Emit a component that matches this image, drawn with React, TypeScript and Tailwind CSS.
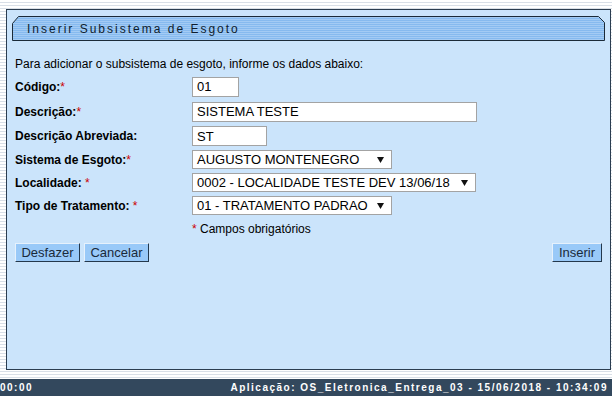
import React from "react";

const Req = ({ space = false }: { space?: boolean }) => (
  <span className="text-[#cc0000] font-normal">{space ? " *" : "*"}</span>
);

function Label({ children }: { children: React.ReactNode }) {
  return <div className="w-[177px] shrink-0 font-bold text-[12px] text-black">{children}</div>;
}

function TextInput({ value, w }: { value: string; w: string }) {
  return (
    <div className={`${w} h-[20px] bg-white border border-[#a3a3a3] pl-[4px] flex items-center text-[13px] text-black leading-none`}>
      {value}
    </div>
  );
}

function Select({ value, w }: { value: string; w: string }) {
  return (
    <div className={`${w} h-[19px] bg-white border border-[#a3a3a3] pl-[4px] pr-[7px] flex items-center justify-between text-[13px] text-black leading-none`}>
      <span>{value}</span>
      <svg width="7" height="6" viewBox="0 0 7 6">
        <polygon points="0,0 7,0 3.5,6" fill="#111" />
      </svg>
    </div>
  );
}

function Btn({ children, w }: { children: React.ReactNode; w: string }) {
  return (
    <div className={`${w} h-[19px] bg-[#99c9f8] border border-t-[#e6f1fc] border-l-[#e6f1fc] border-r-[#24384c] border-b-[#24384c] flex items-center justify-center text-[13px] text-[#1a2a3a] leading-none`}>
      {children}
    </div>
  );
}

export default function App() {
  return (
    <div
      className="w-[612px] h-[396px] overflow-hidden flex flex-col bg-[repeating-linear-gradient(to_bottom,#ffffff_0px,#ffffff_2px,#d9dfe7_2px,#d9dfe7_3px)]"
      style={{ fontFamily: '"Liberation Sans", Arial, sans-serif' }}
    >
      <div className="mt-[9px] ml-[6px] w-[605px] h-[361px] shrink-0 bg-[#cbe4fb] border border-[#2b3d50] pt-[6px] pl-[5px] flex flex-col">
        <div className="relative w-[593px] h-[25px] shrink-0 flex items-center pl-[15px]">
          <svg className="absolute inset-0" width="593" height="25" viewBox="0 0 593 25">
            <defs>
              <pattern id="stripes" width="4" height="2" patternUnits="userSpaceOnUse">
                <rect width="4" height="1" fill="#86baef" />
                <rect y="1" width="4" height="1" fill="#a3cbf4" />
              </pattern>
            </defs>
            <polygon
              points="0.5,7.5 6.5,0.5 586.5,0.5 592.5,6.5 592.5,24.5 0.5,24.5"
              fill="url(#stripes)"
              stroke="#1b2a38"
              strokeWidth="1"
            />
          </svg>
          <span className="relative text-[12px] tracking-[2px] text-[#0e1d2e] leading-none">
            Inserir Subsistema de Esgoto
          </span>
        </div>

        <div className="pl-[3px] flex flex-col">
          <div className="mt-[15px] h-[16px] flex items-center text-[12px] text-black">
            Para adicionar o subsistema de esgoto, informe os dados abaixo:
          </div>
          <div className="mt-[2px] flex flex-col">
            <div className="h-[25px] flex items-center">
              <Label>
                Código:<Req />
              </Label>
              <TextInput value="01" w="w-[47px]" />
            </div>
            <div className="h-[25px] flex items-center">
              <Label>
                Descrição:<Req />
              </Label>
              <TextInput value="SISTEMA TESTE" w="w-[285px]" />
            </div>
            <div className="h-[24px] flex items-center">
              <Label>Descrição Abreviada:</Label>
              <TextInput value="ST" w="w-[75px]" />
            </div>
            <div className="h-[23px] flex items-center">
              <Label>
                Sistema de Esgoto:<Req />
              </Label>
              <Select value="AUGUSTO MONTENEGRO" w="w-[200px]" />
            </div>
            <div className="h-[23px] flex items-center">
              <Label>
                Localidade:<Req space />
              </Label>
              <Select value="0002 - LOCALIDADE TESTE DEV 13/06/18" w="w-[284px]" />
            </div>
            <div className="h-[23px] flex items-center">
              <Label>
                Tipo de Tratamento:<Req space />
              </Label>
              <Select value="01 - TRATAMENTO PADRAO" w="w-[200px]" />
            </div>
            <div className="h-[24px] flex items-center">
              <div className="w-[177px] shrink-0" />
              <div className="text-[12px] text-black">
                <span className="text-[#cc0000]">*</span> Campos obrigatórios
              </div>
            </div>
          </div>
          <div className="mt-[2px] flex items-center pr-[8px]">
            <Btn w="w-[65px]">Desfazer</Btn>
            <div className="ml-[4px]">
              <Btn w="w-[65px]">Cancelar</Btn>
            </div>
            <div className="ml-auto">
              <Btn w="w-[50px]">Inserir</Btn>
            </div>
          </div>
        </div>
      </div>

      <div className="mt-[9px] h-[17px] shrink-0 bg-[#33485d] flex items-center justify-between pr-[4px] text-white font-bold text-[10px] tracking-[1.5px] leading-none">
        <span>00:00</span>
        <span>Aplicação: OS_Eletronica_Entrega_03 - 15/06/2018 - 10:34:09</span>
      </div>
    </div>
  );
}
